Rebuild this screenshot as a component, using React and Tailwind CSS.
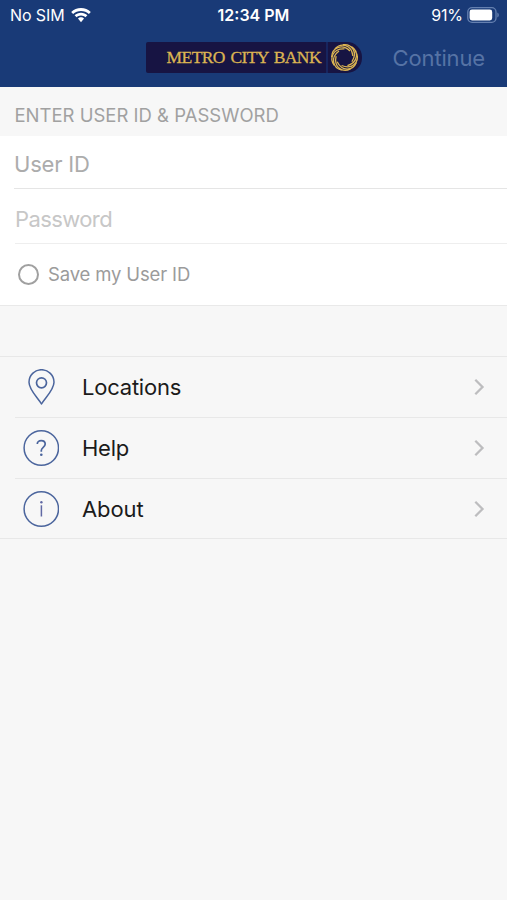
import { useState } from 'react';

const links = [
      { id: 'locations', name: 'Locations', Icon: PinIcon, tracking: 'tracking-[-0.22px]' },
      { id: 'help', name: 'Help', Icon: HelpIcon, tracking: 'tracking-[-0.25px]' },
      { id: 'about', name: 'About', Icon: InfoIcon, tracking: 'tracking-[-0.1px]' },
];

function PinIcon() {
      return (
            <svg className="w-9 h-9" viewBox="0 0 36 36" fill="none" stroke="#4b659d" strokeWidth="1.5">
                  <path d="M18.500 35 C15.500 29.500 6 21 6 13.200 A12.500 12.500 0 0 1 31 13.200 C31 21 21.500 29.500 18.500 35 Z" strokeLinejoin="round" />
                  <circle cx="18.500" cy="13.800" r="5" strokeWidth="1.7" />
            </svg>
      );
}

function HelpIcon() {
      return (
            <svg className="w-9 h-9" viewBox="0 0 36 36" fill="none" stroke="#4b659d" strokeWidth="1.5">
                  <circle cx="18.300" cy="18" r="17.200" />
                  <path d="M14.300 14 C14.300 11.900 15.800 10.700 18.200 10.700 C20.600 10.700 22.200 12 22.200 14.100 C22.200 17.200 18.300 17.500 18.300 20.500 V21.700" strokeWidth="1.700" />
                  <circle cx="18.300" cy="24.800" r="1.300" fill="#4b659d" stroke="none" />
            </svg>
      );
}

function InfoIcon() {
      return (
            <svg className="w-9 h-9" viewBox="0 0 36 36" fill="none" stroke="#4b659d" strokeWidth="1.5">
                  <circle cx="18.300" cy="18" r="17.200" />
                  <path d="M18.400 14.300 V25.500" stroke="#6069a4" strokeWidth="1.500" />
                  <circle cx="18.400" cy="11.200" r="1.200" fill="#6069a4" stroke="none" />
            </svg>
      );
}

function WifiIcon() {
      return (
            <svg className="w-5 h-[15px]" viewBox="0 0 20 15" fill="#fff">
                  <path d="M10 0C6.200 0 2.800 1.500.200 3.900l1.900 2C4.200 4 7 2.900 10 2.900s5.800 1.100 7.900 3l1.900-2C17.200 1.500 13.800 0 10 0Z" />
                  <path d="M10 4.800c-2.500 0-4.700.900-6.400 2.500l2 2C6.700 8.200 8.300 7.500 10 7.500s3.300.700 4.400 1.800l2-2C14.700 5.700 12.500 4.800 10 4.800Z" />
                  <path d="M10 9.300c-1.200 0-2.200.500-3 1.300l3 3.600 3-3.600c-.800-.800-1.800-1.300-3-1.300Z" />
            </svg>
      );
}

function BatteryIcon() {
      return (
            <svg className="w-8 h-4" viewBox="0 0 32 16" fill="none">
                  <rect x=".8" y=".7" width="28.200" height="14.600" rx="4.300" stroke="#6580b0" strokeWidth="1.3" />
                  <rect x="2.600" y="2.500" width="22.600" height="11" rx="2.400" fill="#fff" />
                  <path d="M30.300 5.500v5c1-.400 1.500-1.300 1.500-2.500s-.5-2.100-1.500-2.500Z" fill="#6580b0" />
            </svg>
      );
}

function BankLogo() {
      return (
            <div className="w-[216px] h-[31px] flex rounded-l-[2px] rounded-r-[15px] overflow-hidden bg-[#171443]">
                  <div className="w-[182px] border-r-2 border-[#17255f] flex items-center pl-[21px] whitespace-nowrap font-['Liberation_Serif',serif] text-[#dcb452] text-[17.5px] leading-none tracking-[-0.6px] [word-spacing:1.8px] [-webkit-text-stroke:0.3px_#dcb452]">
                        METRO CITY BANK
                  </div>
                  <svg className="w-[34px] h-[31px]" viewBox="0 0 34 31" fill="none" stroke="#dcb452" strokeWidth="1.3">
                        {[0, 40, 80, 120, 160, 200, 240, 280, 320].map((deg) => (
                              <path key={deg} d="M7 6.800 C13 .3 23.500 2.500 24.900 14" transform={`rotate(${deg} 16.500 15.500)`} />
                        ))}
                  </svg>
            </div>
      );
}

function Chevron() {
      return (
            <svg className="w-3 h-4" viewBox="0 0 12 16" fill="none" stroke="#bdbdbf" strokeWidth="2.300">
                  <path d="M1.300 .8 8.500 8 1.300 15.200" />
            </svg>
      );
}

export default function App() {
      const [userId, setUserId] = useState('');
      const [password, setPassword] = useState('');
      const [save, setSave] = useState(false);

      return (
            <div className="w-full h-[900px] overflow-hidden bg-[#f7f7f7] font-['Inter',sans-serif]">
                  <header className="h-[87px] bg-[#193a77] text-white">
                        <div className="h-[30px] grid grid-cols-3 items-center px-[10px] text-[16px] leading-none">
                              <div className="flex items-center gap-[6px]">
                                    <span className="tracking-[-0.1px]">No SIM</span>
                                    <WifiIcon />
                              </div>
                              <span className="text-center font-semibold">12:34 PM</span>
                              <div className="flex items-center justify-end gap-1 -mr-[2px]">
                                    <span className="tracking-[-0.1px]">91%</span>
                                    <BatteryIcon />
                              </div>
                        </div>
                        <div className="h-[57px] flex items-start justify-end pr-[22px] pt-3">
                              <BankLogo />
                              <button type="button" className="ml-[31px] h-[31px] text-[22px] leading-none tracking-[-0.15px] text-[#5673a5]">Continue</button>
                        </div>
                  </header>

                  <h2 className="h-[49px] flex items-center pl-[14.5px] pt-[7px] text-[18.5px] leading-none text-[#a1a1a1] whitespace-nowrap">ENTER USER ID &amp; PASSWORD</h2>

                  <form className="bg-white border-b border-[#e9e9e9] h-[170px]">
                        <div className="ml-[14px] h-[53px] border-b border-[#e5e5e5]">
                              <input value={userId} onChange={(e) => setUserId(e.target.value)} placeholder="User ID" className="w-full h-full pt-1 text-[22px] tracking-[-0.2px] outline-none placeholder:text-[#acacac]" />
                        </div>
                        <div className="ml-[15px] h-[55px] border-b border-[#eeeeee]">
                              <input type="password" value={password} onChange={(e) => setPassword(e.target.value)} placeholder="Password" className="w-full h-full pt-[6px] text-[22px] tracking-[-0.6px] outline-none placeholder:text-[#c7c7c7]" />
                        </div>
                        <label className="h-[61px] flex items-center pl-[18px] gap-[9px] text-[18.5px] leading-none tracking-[-0.15px] text-[#9b9b9b]">
                              <input type="checkbox" checked={save} onChange={() => setSave((v) => !v)} className="appearance-none w-[21px] h-[21px] rounded-full border-2 border-[#a0a0a0] checked:bg-[#193a77]" />
                              Save my User ID
                        </label>
                  </form>

                  <ul className="mt-[50px] border-y border-[#e8e8e8]">
                        {links.map(({ id, name, Icon, tracking }, i) => (
                              <li key={id} className={i > 0 ? 'ml-[15px] border-t border-[#e8e8e8]' : 'ml-[15px]'}>
                                    <a href="#" className={`${i === 2 ? 'h-[59px]' : 'h-[60px]'} flex items-center pl-2 pr-[21px]`}>
                                          <Icon />
                                          <span className={`ml-[23px] flex-1 text-[22px] leading-none text-[#1b1b1b] ${tracking}`}>{name}</span>
                                          <Chevron />
                                    </a>
                              </li>
                        ))}
                  </ul>
            </div>
      );
}
